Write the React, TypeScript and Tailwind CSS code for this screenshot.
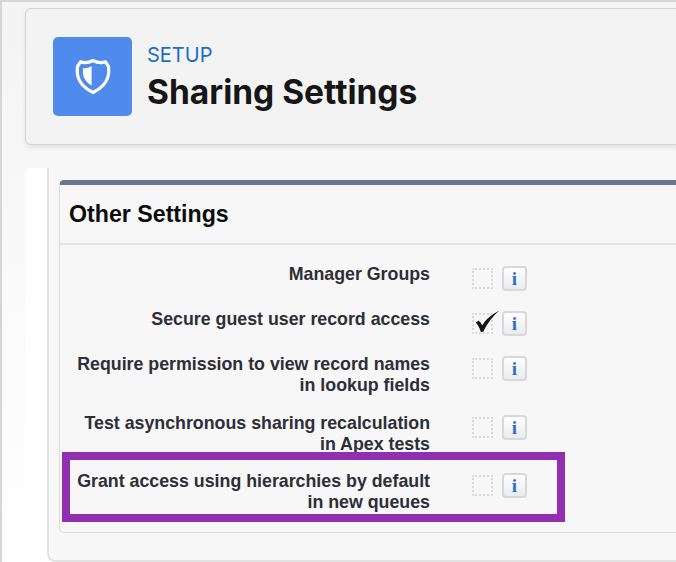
const rows = [
  { lines: ['Manager Groups'], height: 'h-[45px]', checked: false },
  { lines: ['Secure guest user record access'], height: 'h-[45px]', checked: true },
  { lines: ['Require permission to view record names', 'in lookup fields'], height: 'h-[59px]', checked: false },
  { lines: ['Test asynchronous sharing recalculation', 'in Apex tests'], height: 'h-[58px]', checked: false },
  { lines: ['Grant access using hierarchies by default', 'in new queues'], height: 'h-[59px]', checked: false, highlighted: true },
];

function ShieldIcon() {
  return (
    <svg width="36" height="37" viewBox="0 0 36 37" fill="none">
      <path
        d="M18 2.5C22 4.6 27 5 30.5 3.8L33.6 8.6C33.9 12 34 14.5 33.2 18C31.8 24.5 25.5 30.8 18 34.5C10.5 30.8 4.2 24.5 2.8 18C2 14.5 2.1 12 2.4 8.6L5.5 3.8C9 5 14 4.6 18 2.5Z"
        stroke="white"
        strokeWidth="3.2"
        strokeLinejoin="round"
      />
      <path d="M16.6 8.2V27.6C12 25 8.6 20.5 8 15.5C7.8 13.6 7.9 12 8.2 10.2C11 10.4 14 9.6 16.6 8.2Z" fill="white" />
    </svg>
  );
}

function CheckMark() {
  return (
    <svg className="absolute left-[1px] -top-[5px]" width="25" height="23" viewBox="0 0 24 21">
      <path d="M0.8 11.5L3.6 9.5C5 10.8 6 12.4 6.9 14.2C10.5 8.6 15.6 3.6 23.4 0.2C17 5.4 12 11.8 8 20.4L5.6 20.6C4.6 17.2 3 14 0.8 11.5Z" fill="#151515" />
    </svg>
  );
}

function InfoButton() {
  return (
    <div className="flex h-[25px] w-[25px] items-center justify-center rounded-[4px] border-2 border-[#d8d8d8] bg-gradient-to-b from-white to-[#e9ebee] font-['Liberation_Serif',serif] text-[19px] leading-none font-bold text-[#2f6fc8]">
      i
    </div>
  );
}

export default function App() {
  return (
    <div className="h-[562px] w-[676px] overflow-hidden border-t-2 border-l-2 border-[#d6d6d6] bg-gradient-to-b from-[#f4f4f4] to-white font-['Liberation_Sans',sans-serif]">
      {/* Page header */}
      <div className="mt-[6px] ml-[23px] flex h-[137px] w-[700px] items-center gap-[15px] rounded-l-[6px] border border-[#d2d2d2] bg-[#f3f3f3] pl-[27px] shadow-[0_3px_5px_rgba(0,0,0,0.08)]">
        <div className="flex h-[79px] w-[79px] items-center justify-center rounded-[5px] bg-[#4f8bec]">
          <ShieldIcon />
        </div>
        <div>
          <p className="font-['Inter',sans-serif] text-[20px] leading-[26px] text-[#1f6cc4]">SETUP</p>
          <h1 className="mt-[4px] font-['Inter',sans-serif] text-[33.5px] leading-[40px] font-bold text-[#161616]">Sharing Settings</h1>
        </div>
      </div>

      {/* Settings panel */}
      <div className="mt-[23px] ml-[23px] h-[394px] w-[700px] rounded-tl-[6px] bg-white pl-[22px]">
        <div className="h-full rounded-bl-[8px] border-b-2 border-l-2 border-[#e2e2e2] bg-[#f7f7f7] pt-[12px] pl-[10px]">
          <section className="h-[353px] rounded-b-[5px] rounded-tl-[5px] border-t-[5px] border-b border-l border-[#dcdcdc] border-t-[#6b7490]">
            <h2 className="flex h-[60px] items-center border-b-2 border-[#e4e4e4] pl-[9px] text-[23.2px] font-bold text-[#0c0c0c]">
              Other Settings
            </h2>
            <div className="pt-[18px]">
              {rows.map((row) => (
                <div key={row.lines[0]} className={`relative flex items-start ${row.height}`}>
                  <div className="mt-[1px] w-[370px] text-right text-[17.8px] leading-[21px] font-bold text-[#2d2e38]">
                    {row.lines.map((line) => (
                      <div key={line}>{line}</div>
                    ))}
                  </div>
                  <div className="mt-[3px] ml-[42px] flex items-start gap-[9px]">
                    <div className="relative mt-[2px] h-[21px] w-[21px] rounded-[2px] border-2 border-dotted border-[#d9d9d9]">
                      {row.checked && <CheckMark />}
                    </div>
                    <InfoButton />
                  </div>
                  {row.highlighted && (
                    <div className="absolute -top-[18px] left-[2px] h-[70px] w-[503px] border-8 border-[#9030b0]" />
                  )}
                </div>
              ))}
            </div>
          </section>
        </div>
      </div>
    </div>
  );
}
